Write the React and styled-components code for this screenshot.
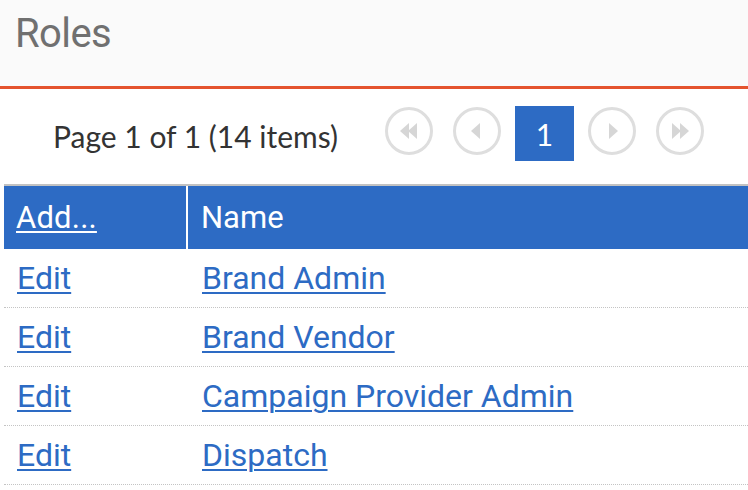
import React from "react";
import styled, { createGlobalStyle } from "styled-components";

const GlobalStyle = createGlobalStyle`
  html, body {
    margin: 0;
    padding: 0;
    background: #ffffff;
  }
  body {
    font-family: Roboto, "Liberation Sans", sans-serif;
  }
`;

const Page = styled.div`
  width: 748px;
  height: 490px;
  overflow: hidden;
  background: #ffffff;
`;

const TitleBar = styled.header`
  height: 89px;
  background: #fafafa;
  border-bottom: 3px solid #e4532e;
  display: flex;
  align-items: flex-start;
  padding: 10px 0 0 15px;
  box-sizing: border-box;
`;

const Title = styled.h1`
  margin: 0;
  font-family: Roboto, "Liberation Sans", sans-serif;
  font-weight: 400;
  font-size: 40px;
  letter-spacing: -0.6px;
  color: #707070;
  line-height: 48px;
`;

const Pager = styled.div`
  height: 95px;
  display: flex;
  align-items: center;
  padding: 0 0 6px 53px;
  box-sizing: border-box;
`;

const PageInfo = styled.span`
  font-family: Lato, "Open Sans", sans-serif;
  font-size: 30px;
  color: #333333;
  margin-right: 47px;
  position: relative;
  top: 2px;
`;

const PagerButtons = styled.div`
  display: flex;
  align-items: center;
`;

const RoundButton = styled.button`
  width: 48px;
  height: 48px;
  border-radius: 50%;
  border: 3.5px solid #dedede;
  background: #ffffff;
  display: flex;
  align-items: center;
  justify-content: center;
  padding: 0;
  margin: 0 ${(p) => p.$mr || 0}px 0 0;
  box-sizing: border-box;
  position: relative;
  top: -3px;
`;

const CurrentPage = styled.span`
  width: 59px;
  height: 55px;
  background: #2d6bc4;
  color: #ffffff;
  display: flex;
  align-items: center;
  justify-content: center;
  font-family: Lato, "Open Sans", sans-serif;
  font-size: 30px;
  margin: 0 14px;
`;

const Table = styled.div`
  margin-left: 4px;
  border-top: 2px solid #c2c2c2;
`;

const HeadRow = styled.div`
  display: grid;
  grid-template-columns: 184px 1fr;
  height: 63px;
  background: #2d6bc4;
`;

const HeadCell = styled.div`
  display: flex;
  align-items: center;
  padding-left: ${(p) => p.$pl}px;
  font-size: 31px;
  color: #ffffff;
  border-right: ${(p) => (p.$divider ? "2px solid #ffffff" : "none")};
`;

const Row = styled.div`
  display: grid;
  grid-template-columns: 186px 1fr;
  height: 59px;
  box-sizing: border-box;
  border-bottom: 1px dotted #c4c4c4;
`;

const Cell = styled.div`
  display: flex;
  align-items: center;
  padding-left: ${(p) => p.$pl}px;
`;

const Link = styled.a`
  font-family: Roboto, "Liberation Sans", sans-serif;
  font-size: 32px;
  color: #2d6bc4;
  text-decoration: underline;
  text-decoration-thickness: 2px;
  text-underline-offset: 3px;
  cursor: pointer;
`;

const HeadLink = styled(Link)`
  font-size: 31px;
  color: #ffffff;
  letter-spacing: 0.2px;
`;

function Arrow({ dir, double }) {
  const tri = (x) =>
    dir === "left"
      ? `M${x + 9} 3 L${x} 11 L${x + 9} 19 Z`
      : `M${x} 3 L${x + 9} 11 L${x} 19 Z`;
  return (
    <svg width="22" height="22" viewBox="0 0 22 22">
      {double ? (
        <>
          <path d={tri(dir === "left" ? 2 : 3)} fill="#d6d6d6" />
          <path d={tri(dir === "left" ? 10 : 11)} fill="#d6d6d6" />
        </>
      ) : (
        <path d={tri(dir === "left" ? 5 : 8)} fill="#d6d6d6" />
      )}
    </svg>
  );
}

const roles = ["Brand Admin", "Brand Vendor", "Campaign Provider Admin", "Dispatch"];

export default function App() {
  return (
    <Page>
      <GlobalStyle />
      <TitleBar>
        <Title>Roles</Title>
      </TitleBar>
      <Pager>
        <PageInfo>Page 1 of 1 (14 items)</PageInfo>
        <PagerButtons>
          <RoundButton $mr={20}>
            <Arrow dir="left" double />
          </RoundButton>
          <RoundButton>
            <Arrow dir="left" />
          </RoundButton>
          <CurrentPage>1</CurrentPage>
          <RoundButton $mr={20}>
            <Arrow dir="right" />
          </RoundButton>
          <RoundButton>
            <Arrow dir="right" double />
          </RoundButton>
        </PagerButtons>
      </Pager>
      <Table>
        <HeadRow>
          <HeadCell $pl={12} $divider>
            <HeadLink>Add...</HeadLink>
          </HeadCell>
          <HeadCell $pl={13}>Name</HeadCell>
        </HeadRow>
        {roles.map((r) => (
          <Row key={r}>
            <Cell $pl={13}>
              <Link>Edit</Link>
            </Cell>
            <Cell $pl={12}>
              <Link>{r}</Link>
            </Cell>
          </Row>
        ))}
      </Table>
    </Page>
  );
}
